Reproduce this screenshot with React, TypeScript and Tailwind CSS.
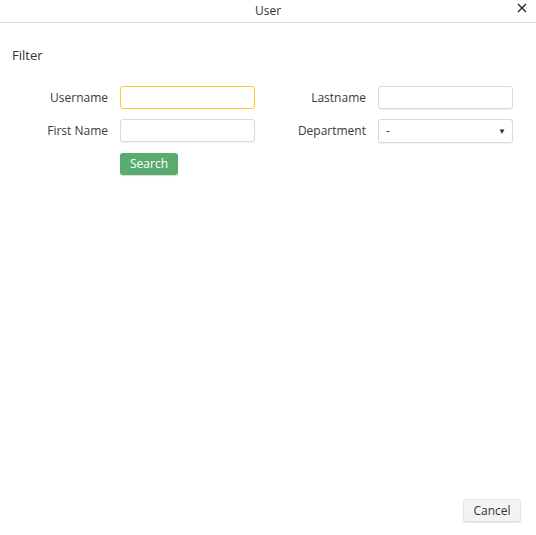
import React from "react";

const font = { fontFamily: '"Open Sans", "Noto Sans", sans-serif' };

function Field({ label, w, focused, select }: { label: string; w: string; focused?: boolean; select?: boolean }) {
  return (
    <div className="flex items-center">
      <label className={"text-right text-[12px] text-[#3a3a3a] " + w}>{label}</label>
      <div className="ml-[12px]">
        {select ? (
          <div className="flex h-[24px] w-[135px] items-center justify-between rounded-[3px] border border-[#d9d9d9] bg-white pl-[7px] pr-[6px] text-[12px] text-[#333] shadow-[0_1px_1px_rgba(0,0,0,0.06)]">
            <span>-</span>
            <span className="text-[8px]">▼</span>
          </div>
        ) : (
          <input
            className={
              "block h-[23px] w-[135px] rounded-[3px] border bg-white px-2 text-[12px] outline-none " +
              (focused ? "border-[#ffc929]" : "border-[#d9d9d9] shadow-[0_1px_1px_rgba(0,0,0,0.06)]")
            }
          />
        )}
      </div>
    </div>
  );
}

export default function App() {
  return (
    <div className="flex h-[535px] w-[536px] flex-col bg-white text-[#333]" style={font}>
      <div className="relative flex h-[23px] items-center justify-center border-b border-[#dcdcdc]">
        <span className="text-[12px] leading-none">User</span>
        <svg className="absolute right-[9px] top-[3px]" width="10" height="10" viewBox="0 0 10 10">
          <path d="M1 1L9 9M9 1L1 9" stroke="#222" strokeWidth="1.3" />
        </svg>
      </div>
      <div className="flex-1 px-[12px]">
        <h2 className="mt-[23px] text-[13px] font-normal leading-[18px] text-[#333]">Filter</h2>
        <div className="mt-[22px] flex">
          <div className="flex flex-col gap-[10px]">
            <Field label="Username" w="w-[96px]" focused />
            <Field label="First Name" w="w-[96px]" />
          </div>
          <div className="flex flex-col gap-[10px]">
            <Field label="Lastname" w="w-[111px]" />
            <Field label="Department" w="w-[111px]" select />
          </div>
        </div>
        <div className="mt-[7px] pl-[108px]">
          <button className="h-[22px] w-[58px] rounded-[3px] bg-[#59ac6e] text-[12px] text-white shadow-[0_1px_1px_rgba(0,0,0,0.15)]">
            Search
          </button>
        </div>
      </div>
      <div className="flex justify-end pb-[13px] pr-[15px]">
        <button className="h-[23px] w-[58px] rounded-[3px] border border-[#e2e2e2] bg-[#f3f3f3] text-[12px] text-[#333] shadow-[0_1px_1px_rgba(0,0,0,0.1)]">
          Cancel
        </button>
      </div>
    </div>
  );
}
